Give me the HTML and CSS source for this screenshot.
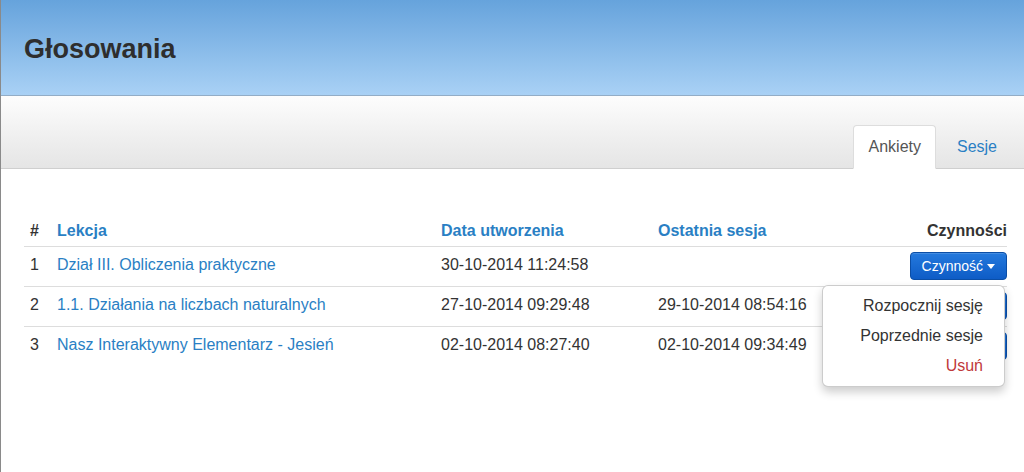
FILE: index.html
```html
<!DOCTYPE html>
<html lang="pl">
<head>
    <meta charset="UTF-8">
    <meta name="viewport" content="width=device-width, initial-scale=1.0">
    <title>Głosowania</title>
    <link rel="stylesheet" href="styles.css">
</head>
<body>
    <header class="page-header">
        <h1>Głosowania</h1>
    </header>

    <nav class="subnav">
        <ul class="tabs">
            <li class="active"><a href="#">Ankiety</a></li>
            <li><a href="#">Sesje</a></li>
        </ul>
    </nav>

    <main class="content">
        <table class="polls">
            <thead>
                <tr>
                    <th class="col-num">#</th>
                    <th class="col-lesson"><a href="#">Lekcja</a></th>
                    <th class="col-created"><a href="#">Data utworzenia</a></th>
                    <th class="col-last"><a href="#">Ostatnia sesja</a></th>
                    <th class="col-actions">Czynności</th>
                </tr>
            </thead>
            <tbody>
                <tr>
                    <td>1</td>
                    <td><a href="#">Dział III. Obliczenia praktyczne</a></td>
                    <td>30-10-2014 11:24:58</td>
                    <td></td>
                    <td class="col-actions">
                        <div class="actions open">
                            <button class="action-button">Czynność <span class="caret"></span></button>
                            <ul class="dropdown">
                                <li><a href="#">Rozpocznij sesję</a></li>
                                <li><a href="#">Poprzednie sesje</a></li>
                                <li><a href="#" class="danger">Usuń</a></li>
                            </ul>
                        </div>
                    </td>
                </tr>
                <tr>
                    <td>2</td>
                    <td><a href="#">1.1. Działania na liczbach naturalnych</a></td>
                    <td>27-10-2014 09:29:48</td>
                    <td>29-10-2014 08:54:16</td>
                    <td class="col-actions">
                        <div class="actions">
                            <button class="action-button">Czynność <span class="caret"></span></button>
                        </div>
                    </td>
                </tr>
                <tr>
                    <td>3</td>
                    <td><a href="#">Nasz Interaktywny Elementarz - Jesień</a></td>
                    <td>02-10-2014 08:27:40</td>
                    <td>02-10-2014 09:34:49</td>
                    <td class="col-actions">
                        <div class="actions">
                            <button class="action-button">Czynność <span class="caret"></span></button>
                        </div>
                    </td>
                </tr>
            </tbody>
        </table>
    </main>
</body>
</html>
```

FILE: styles.css
```css
* {
    box-sizing: border-box;
}

html, body {
    height: 100%;
}

body {
    margin: 0;
    border-left: 1px solid #8a8a8a;
    font-family: "Liberation Sans", Arial, Helvetica, sans-serif;
    font-size: 16px;
    color: #333;
    background-color: #fff;
}

a {
    color: #2a7fc4;
    text-decoration: none;
}

/* Header */
.page-header {
    height: 96px;
    padding: 33px 0 0 23px;
    background: linear-gradient(to bottom, #66a3dc, #a9d1f5);
    border-bottom: 1px solid #93adc6;
}

.page-header h1 {
    margin: 0;
    font-size: 27px;
    line-height: 32px;
    font-weight: bold;
    color: #2e2e2e;
}

/* Tabs bar */
.subnav {
    height: 73px;
    display: flex;
    justify-content: flex-end;
    align-items: flex-end;
    padding-right: 13px;
    background: linear-gradient(to bottom, #fdfdfd, #e5e5e5);
    border-bottom: 1px solid #cfcfcf;
}

.tabs {
    display: flex;
    gap: 7px;
    margin: 0 0 -1px;
    padding: 0;
    list-style: none;
}

.tabs a {
    display: block;
    padding: 10px 13px;
    line-height: 22px;
    border: 1px solid transparent;
    border-radius: 4px 4px 0 0;
}

.tabs .active a {
    padding: 10px 14px 10px 15px;
    color: #555;
    background-color: #fff;
    border-color: #ddd #ddd transparent;
}

/* Table */
.content {
    padding: 45px 17px 0 23px;
}

.polls {
    width: 100%;
    border-collapse: collapse;
    table-layout: fixed;
}

.polls th,
.polls td {
    padding: 0 6px;
    text-align: left;
    vertical-align: middle;
    line-height: 23px;
    white-space: nowrap;
}

.polls th {
    height: 32px;
    padding-top: 1px;
    font-weight: bold;
    border-bottom: 1px solid #ddd;
}

.polls td {
    height: 40px;
    padding-bottom: 4px;
    border-top: 1px solid #ddd;
}

.col-num { width: 27px; }
.col-lesson { width: 384px; }
.col-created { width: 217px; }
.col-last { width: 160px; }

.polls .col-actions {
    text-align: right;
    padding-right: 0;
}

.polls td.col-actions {
    padding-bottom: 0;
}

/* Action button + dropdown */
.actions {
    position: relative;
    display: inline-block;
    vertical-align: middle;
}

.action-button {
    display: inline-flex;
    align-items: center;
    gap: 4px;
    height: 28px;
    padding: 0 11px;
    font-family: inherit;
    font-size: 14px;
    color: #fff;
    background: linear-gradient(to bottom, #2479dd, #0e5cc6);
    border: 1px solid #0b4ea6;
    border-radius: 4px;
    box-shadow: inset 0 1px 0 rgba(255, 255, 255, 0.15);
    cursor: pointer;
}

.caret {
    width: 0;
    height: 0;
    border-top: 5px solid #fff;
    border-left: 4px solid transparent;
    border-right: 4px solid transparent;
}

.dropdown {
    display: none;
    position: absolute;
    top: calc(100% + 5px);
    right: 2px;
    z-index: 10;
    width: 183px;
    margin: 0;
    padding: 5px 0;
    list-style: none;
    text-align: right;
    background-color: #fff;
    border: 1px solid rgba(0, 0, 0, 0.2);
    border-radius: 6px;
    box-shadow: 0 5px 10px rgba(0, 0, 0, 0.2);
}

.open .dropdown {
    display: block;
}

.dropdown a {
    display: block;
    padding: 4px 21px;
    line-height: 22px;
    color: #333;
}

.dropdown a.danger {
    color: #c0393b;
}
```
